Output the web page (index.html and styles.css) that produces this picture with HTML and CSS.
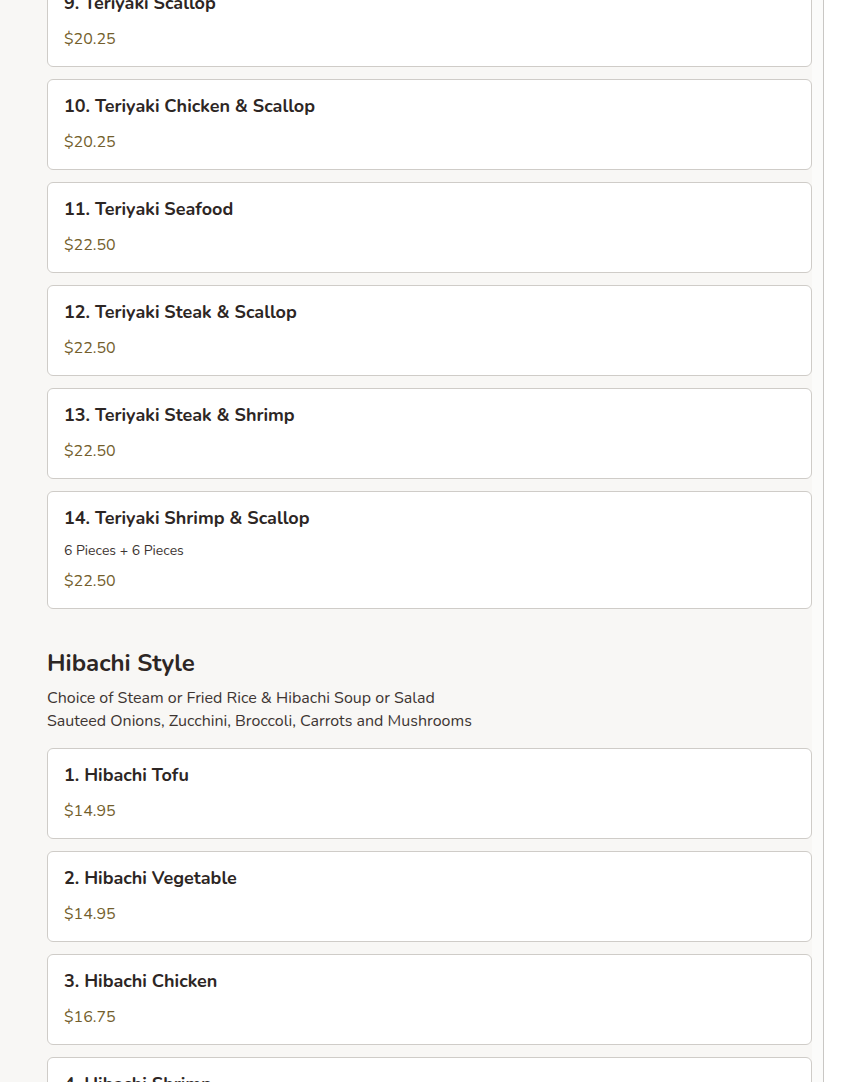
FILE: index.html
```html
<!DOCTYPE html>
<html lang="en">
<head>
<meta charset="utf-8">
<title>Menu</title>
<link rel="stylesheet" href="styles.css">
</head>
<body>
<div class="page">
  <main class="menu">
    <div class="list first">
      <div class="card"><h3 class="name">9. Teriyaki Scallop</h3><div class="price">$20.25</div></div>
      <div class="card"><h3 class="name">10. Teriyaki Chicken &amp; Scallop</h3><div class="price">$20.25</div></div>
      <div class="card"><h3 class="name">11. Teriyaki Seafood</h3><div class="price">$22.50</div></div>
      <div class="card"><h3 class="name">12. Teriyaki Steak &amp; Scallop</h3><div class="price">$22.50</div></div>
      <div class="card"><h3 class="name">13. Teriyaki Steak &amp; Shrimp</h3><div class="price">$22.50</div></div>
      <div class="card"><h3 class="name">14. Teriyaki Shrimp &amp; Scallop</h3><div class="desc">6 Pieces + 6 Pieces</div><div class="price">$22.50</div></div>
    </div>
    <section class="section">
      <h2 class="section-title">Hibachi Style</h2>
      <p class="section-desc">Choice of Steam or Fried Rice &amp; Hibachi Soup or Salad<br>Sauteed Onions, Zucchini, Broccoli, Carrots and Mushrooms</p>
      <div class="list">
        <div class="card"><h3 class="name">1. Hibachi Tofu</h3><div class="price">$14.95</div></div>
        <div class="card"><h3 class="name">2. Hibachi Vegetable</h3><div class="price">$14.95</div></div>
        <div class="card"><h3 class="name">3. Hibachi Chicken</h3><div class="price">$16.75</div></div>
        <div class="card"><h3 class="name">4. Hibachi Shrimp</h3><div class="price">$18.95</div></div>
      </div>
    </section>
  </main>
  <div class="gutter"></div>
  <aside class="side"></aside>
</div>
</body>
</html>
```
FILE: styles.css
```css
html, body {
  margin: 0;
  padding: 0;
  height: 100%;
  overflow: hidden;
}
body {
  font-family: "Nunito", "Lato", "Open Sans", sans-serif;
  background: #ffffff;
  color: #2a2321;
}
.page {
  display: flex;
  min-height: 100%;
  align-items: stretch;
}
.menu {
  flex: 1;
  background: #f8f7f5;
  padding: 0 0 0 47px;
}
.gutter {
  width: 11px;
  background: #fbfbfa;
  border-right: 1px solid #c9c7c4;
}
.side {
  width: 20px;
  background: #ffffff;
}
.list {
  display: flex;
  flex-direction: column;
  gap: 12px;
}
.list.first {
  margin-top: -24px;
}
.card {
  background: #ffffff;
  border: 1px solid #cfccc8;
  border-radius: 6px;
  padding: 15px 16px 15px;
  display: flex;
  flex-direction: column;
}
.name {
  margin: 0 0 12px;
  font-size: 18px;
  line-height: 23px;
  font-weight: 700;
  color: #2d2624;
}
.desc {
  margin: 0 0 10px;
  font-size: 14px;
  line-height: 17px;
  color: #3d3532;
}
.price {
  font-size: 16px;
  line-height: 24px;
  color: #735e2c;
}
.section {
  padding-top: 36px;
}
.section-title {
  margin: 0;
  font-size: 24px;
  line-height: 36px;
  font-weight: 700;
  color: #2d2624;
}
.section-desc {
  margin: 6px 0 15px;
  font-size: 16px;
  line-height: 23px;
  color: #3d3532;
}
```
